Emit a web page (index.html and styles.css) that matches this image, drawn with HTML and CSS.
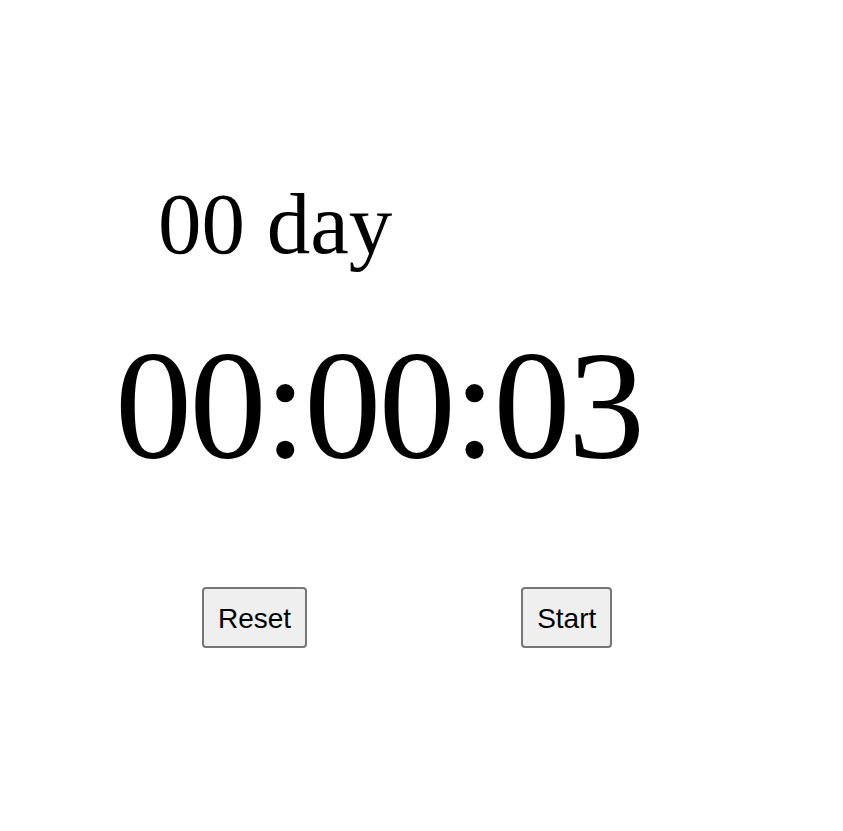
FILE: index.html
```html
<!DOCTYPE html>
<html>
<head>
<meta charset="utf-8">
<link rel="stylesheet" href="styles.css">
</head>
<body>
<div class="timer">
  <div class="days">00 day</div>
  <div class="clock">00:00:03</div>
  <div class="controls">
    <button class="btn btn-reset">Reset</button>
    <button class="btn btn-start">Start</button>
  </div>
</div>
</body>
</html>
```

FILE: styles.css
```css
html, body {
  margin: 0;
  padding: 0;
  background: #ffffff;
}
.timer {
  font-family: "Liberation Serif", "Times New Roman", serif;
  color: #000;
  padding-top: 174px;
}
.days {
  font-size: 87px;
  line-height: 100px;
  padding-left: 158px;
}
.clock {
  font-size: 154px;
  line-height: 180px;
  letter-spacing: -2.5px;
  padding-left: 115px;
  margin-top: 41px;
}
.controls {
  display: flex;
  align-items: flex-start;
  margin-top: 92px;
  padding-left: 202px;
  gap: 214px;
}
.btn {
  font-family: "Liberation Sans", Arial, sans-serif;
  font-size: 28px;
  line-height: 33px;
  padding: 13px 14px 11px;
  background: #efefef;
  border: 2px solid #767676;
  border-radius: 4px;
  color: #000;
}
```
